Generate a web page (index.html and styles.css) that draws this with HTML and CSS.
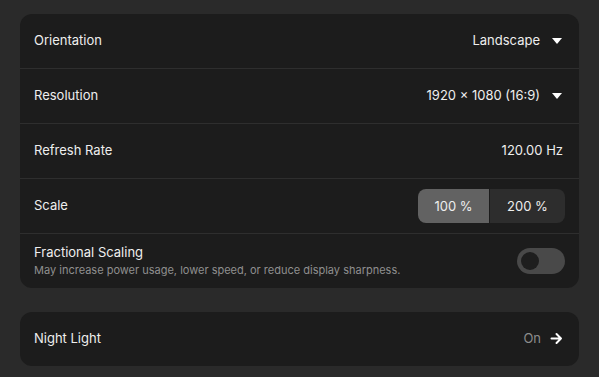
FILE: index.html
```html
<!DOCTYPE html>
<html lang="en">
  <head>
    <meta charset="UTF-8">
    <meta name="viewport" content="width=device-width, initial-scale=1.0">
    <title>Displays</title>
    <link rel="stylesheet" href="styles.css">
  </head>
  <body>
    <div class="page">
      <section class="card">
        <div class="row">
          <span class="label">Orientation</span>
          <span class="value">Landscape
            <svg class="caret" width="10" height="6" viewBox="0 0 10 6"><path d="M0 0h10L5 6z" fill="#fff"/></svg>
          </span>
        </div>
        <div class="row">
          <span class="label">Resolution</span>
          <span class="value">1920 × 1080 (16:9)
            <svg class="caret" width="10" height="6" viewBox="0 0 10 6"><path d="M0 0h10L5 6z" fill="#fff"/></svg>
          </span>
        </div>
        <div class="row">
          <span class="label">Refresh Rate</span>
          <span class="value">120.00 Hz</span>
        </div>
        <div class="row">
          <span class="label">Scale</span>
          <div class="segmented">
            <button class="seg active">100 %</button>
            <button class="seg">200 %</button>
          </div>
        </div>
        <div class="row">
          <div class="stack">
            <span class="label">Fractional Scaling</span>
            <span class="sub">May increase power usage, lower speed, or reduce display sharpness.</span>
          </div>
          <div class="toggle"><div class="knob"></div></div>
        </div>
      </section>

      <section class="card">
        <div class="row">
          <span class="label">Night Light</span>
          <span class="value muted">On
            <svg class="arrow" width="13" height="13" viewBox="0 0 13 13"><path d="M1.5 6.5h9.5M6.5 2l4.5 4.5-4.5 4.5" stroke="#fff" stroke-width="2" fill="none" stroke-linecap="round" stroke-linejoin="round"/></svg>
          </span>
        </div>
      </section>
    </div>
  </body>
</html>
```

FILE: styles.css
```css
body, html {
  margin: 0;
  padding: 0;
  height: 100%;
  background-color: #2a2a2a;
  font-family: Inter, 'Noto Sans', sans-serif;
  font-size: 13px;
  color: #eeeeee;
}

.page {
  padding: 14px 20px;
  display: flex;
  flex-direction: column;
  gap: 24px;
}

.card {
  background-color: #1c1c1c;
  border-radius: 12px;
  overflow: hidden;
}

.row {
  height: 54px;
  display: flex;
  align-items: center;
  justify-content: space-between;
  padding: 0 16px 2px 14px;
  box-sizing: border-box;
  border-top: 1px solid #2e2e2e;
}

.row:first-child {
  border-top: none;
  height: 54px;
}

.row + .row {
  height: 55px;
}

.value {
  display: flex;
  align-items: center;
  gap: 12px;
}

.value.muted {
  color: #8c8c8c;
  gap: 9px;
}

.caret {
  margin-right: 1px;
  margin-top: 2px;
}

.arrow {
  margin-top: 1px;
}

.stack {
  display: flex;
  flex-direction: column;
  gap: 3px;
  margin-top: 1px;
}

.sub {
  font-size: 11px;
  color: #8f8f8f;
}

.segmented {
  display: flex;
  gap: 1px;
  margin-right: -2px;
  margin-bottom: -2px;
}

.seg {
  height: 34px;
  border: none;
  font-family: inherit;
  font-size: 13px;
  color: #eeeeee;
  background-color: #2d2d2d;
  width: 75px;
  padding: 0;
}

.seg:first-child {
  border-radius: 8px 0 0 8px;
  width: 71px;
}

.seg:last-child {
  border-radius: 0 8px 8px 0;
}

.seg.active {
  background-color: #626262;
}

.toggle {
  width: 48px;
  height: 26px;
  border-radius: 13px;
  background-color: #494949;
  display: flex;
  align-items: center;
  padding-left: 4px;
  box-sizing: border-box;
  margin-right: -2px;
  margin-bottom: -2px;
}

.knob {
  width: 18px;
  height: 18px;
  border-radius: 50%;
  background-color: #1e1e1e;
}
```
